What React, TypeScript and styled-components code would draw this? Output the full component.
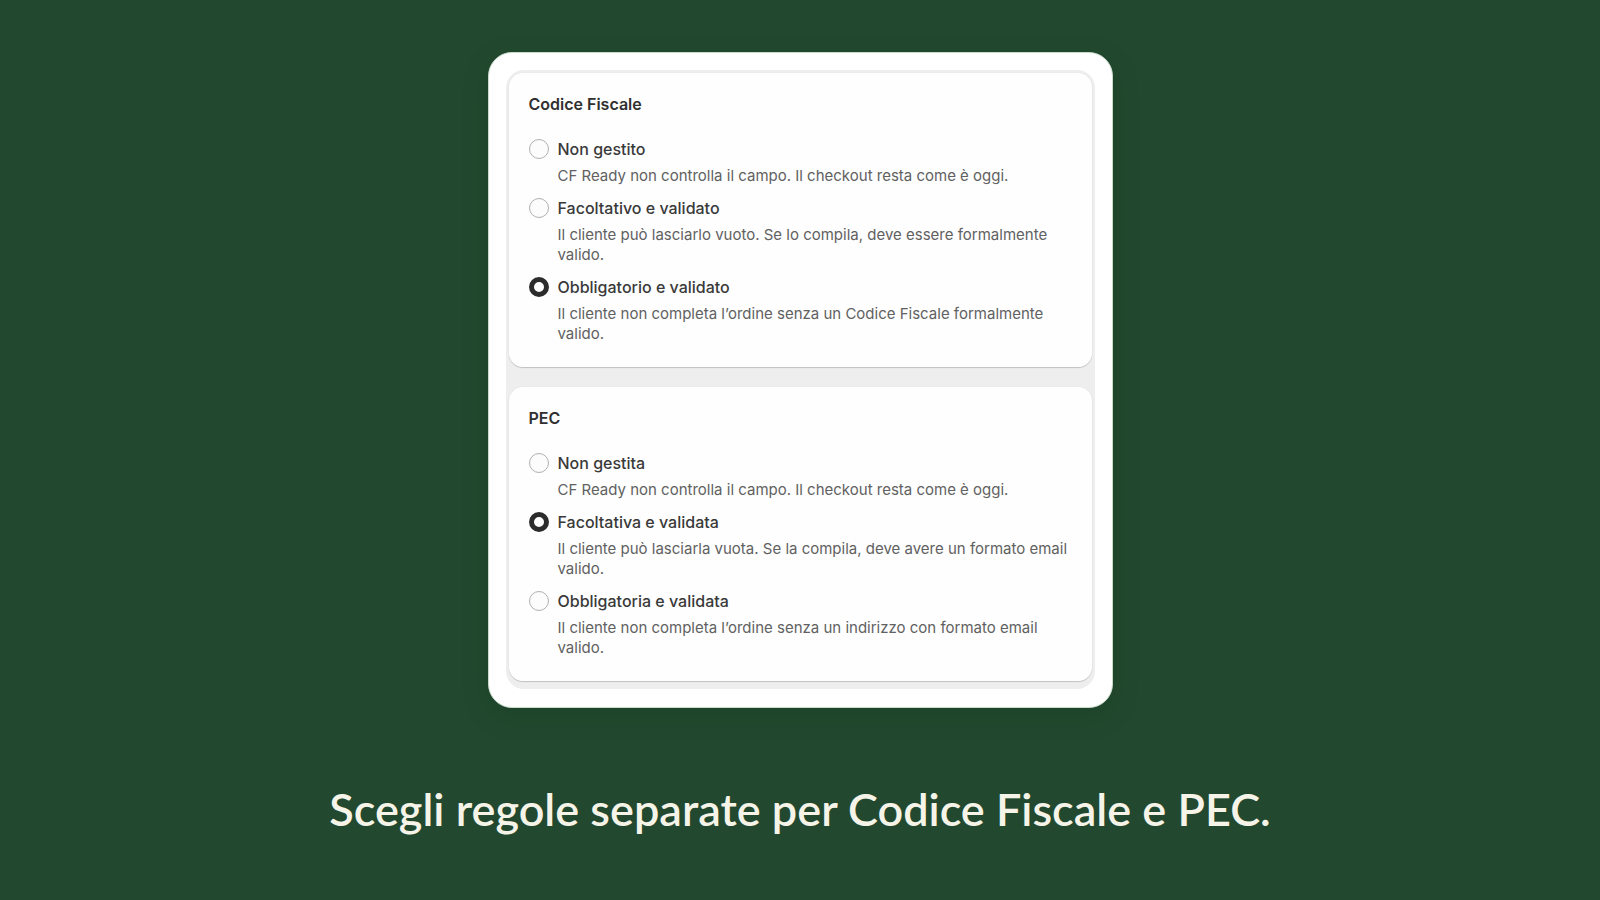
import React from "react";
import styled, { createGlobalStyle } from "styled-components";

const GlobalStyle = createGlobalStyle`
  *, *::before, *::after { box-sizing: border-box; }
  body {
    margin: 0;
    background: #22492f;
    font-family: Inter, "Liberation Sans", sans-serif;
  }
`;

const Page = styled.main`
  display: flex;
  flex-direction: column;
  align-items: center;
  min-height: 100vh;
  padding: 52px 24px 48px;
  background: #22492f;
`;

const Frame = styled.form`
  width: 100%;
  max-width: 625px;
  padding: 17px 17px 18px;
  border: 1px solid #c9dacb;
  border-radius: 24px;
  background: #ffffff;
  box-shadow: 0 8px 28px rgba(0, 40, 10, 0.16);
`;

const PanelStack = styled.div`
  display: flex;
  flex-direction: column;
  gap: 20px;
  padding: 3px 3px 8px;
  border-radius: 18px;
  background: #eeeeee;
`;

const Panel = styled.fieldset`
  min-width: 0;
  margin: 0;
  padding: 19px 20px 23px;
  border: 0;
  border-radius: 14px;
  background: #fefefe;
  box-shadow: 0 1px 1px rgba(0, 0, 0, 0.18), 0 0 1px rgba(0, 0, 0, 0.14);
`;

const PanelTitle = styled.legend`
  float: left;
  width: 100%;
  margin-bottom: 20px;
  padding: 0;
  color: #303030;
  font-size: 16px;
  font-weight: 600;
  line-height: 24px;
`;

const OptionList = styled.div`
  clear: both;
  display: flex;
  flex-direction: column;
  gap: 9px;
`;

const Option = styled.div`
  display: grid;
  grid-template-columns: 20px 1fr;
  column-gap: 9px;
  row-gap: 4px;
`;

const Radio = styled.input`
  appearance: none;
  width: 20px;
  height: 20px;
  margin: 3px 0 0;
  border: 1px solid #b0b0b0;
  border-radius: 50%;
  background: #fcfcfc;

  &:checked {
    border: 5px solid #2c2c2c;
    background: #ffffff;
  }
`;

const OptionLabel = styled.label`
  color: #3a3a3a;
  font-size: 16px;
  font-weight: 450;
  line-height: 26px;
`;

const OptionHelp = styled.p`
  grid-column: 2;
  margin: 0;
  color: #616161;
  font-size: 15px;
  line-height: 20px;
`;

const Caption = styled.h1`
  margin: 71px 0 0;
  color: #f6f4e8;
  font-family: Lato, "Open Sans", sans-serif;
  font-size: 45px;
  font-weight: 600;
  line-height: 60px;
  text-align: center;
`;

interface Choice {
  value: string;
  label: string;
  help: string;
}

interface RuleGroup {
  name: string;
  title: string;
  selected: string;
  choices: Choice[];
}

const groups: RuleGroup[] = [
  {
    name: "codice-fiscale",
    title: "Codice Fiscale",
    selected: "required",
    choices: [
      {
        value: "off",
        label: "Non gestito",
        help: "CF Ready non controlla il campo. Il checkout resta come è oggi.",
      },
      {
        value: "optional",
        label: "Facoltativo e validato",
        help: "Il cliente può lasciarlo vuoto. Se lo compila, deve essere formalmente valido.",
      },
      {
        value: "required",
        label: "Obbligatorio e validato",
        help: "Il cliente non completa l’ordine senza un Codice Fiscale formalmente valido.",
      },
    ],
  },
  {
    name: "pec",
    title: "PEC",
    selected: "optional",
    choices: [
      {
        value: "off",
        label: "Non gestita",
        help: "CF Ready non controlla il campo. Il checkout resta come è oggi.",
      },
      {
        value: "optional",
        label: "Facoltativa e validata",
        help: "Il cliente può lasciarla vuota. Se la compila, deve avere un formato email valido.",
      },
      {
        value: "required",
        label: "Obbligatoria e validata",
        help: "Il cliente non completa l’ordine senza un indirizzo con formato email valido.",
      },
    ],
  },
];

function RulePanel({ group }: { group: RuleGroup }) {
  return (
    <Panel>
      <PanelTitle>{group.title}</PanelTitle>
      <OptionList>
        {group.choices.map((choice) => {
          const id = `${group.name}-${choice.value}`;
          return (
            <Option key={choice.value}>
              <Radio
                type="radio"
                id={id}
                name={group.name}
                value={choice.value}
                defaultChecked={choice.value === group.selected}
                aria-describedby={`${id}-help`}
              />
              <OptionLabel htmlFor={id}>{choice.label}</OptionLabel>
              <OptionHelp id={`${id}-help`}>{choice.help}</OptionHelp>
            </Option>
          );
        })}
      </OptionList>
    </Panel>
  );
}

export default function App() {
  return (
    <>
      <GlobalStyle />
      <Page>
        <Frame>
          <PanelStack>
            {groups.map((group) => (
              <RulePanel key={group.name} group={group} />
            ))}
          </PanelStack>
        </Frame>
        <Caption>Scegli regole separate per Codice Fiscale e PEC.</Caption>
      </Page>
    </>
  );
}
